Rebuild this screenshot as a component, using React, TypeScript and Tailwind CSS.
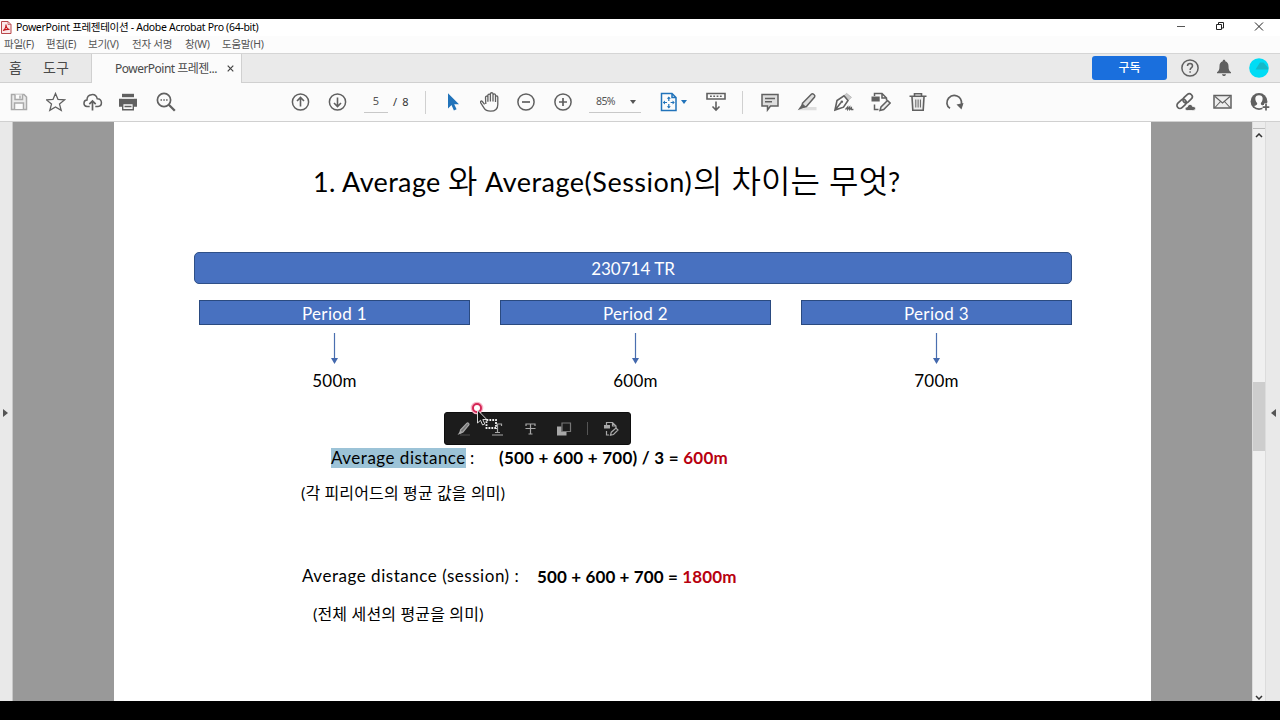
import React from 'react';

type IconProps = { className?: string; children: React.ReactNode };

const Icon: React.FC<IconProps> = ({ className = 'text-[#606060]', children }) => (
  <svg
    className={`w-5 h-5 shrink-0 ${className}`}
    viewBox="0 0 20 20"
    fill="none"
    stroke="currentColor"
    strokeWidth="1.5"
  >
    {children}
  </svg>
);

const Cell: React.FC<{ children: React.ReactNode }> = ({ children }) => (
  <div className="w-[37px] h-full shrink-0 flex items-center justify-center">{children}</div>
);

const menus = [
  { label: '파일(F)', width: 'w-[42px]' },
  { label: '편집(E)', width: 'w-[42px]' },
  { label: '보기(V)', width: 'w-[44px]' },
  { label: '전자 서명', width: 'w-[53px]' },
  { label: '창(W)', width: 'w-[37px]' },
  { label: '도움말(H)', width: 'w-[50px]' },
];

const periods = [
  { name: 'Period 1', value: '500m' },
  { name: 'Period 2', value: '600m' },
  { name: 'Period 3', value: '700m' },
];

const TitleBar: React.FC = () => (
  <div className="h-[17px] bg-white flex items-center">
    <svg className="w-3 h-[13px] shrink-0" viewBox="0 0 12 13" fill="none">
      <path d="M1.5 .5h6.5l3 3v9H1.500z" fill="#fbe9ea" stroke="#b7474b" />
      <path d="M8 .5v3h3" stroke="#b7474b" strokeWidth=".7" />
      <path d="M3 9.500c2-1 3-4 3-6 0 3 1.500 4.500 3.500 5-2-.3-4 0-6.500 1z" stroke="#c4161c" strokeWidth="1.100" />
    </svg>
    <div className="ml-1 text-[10.5px] text-black whitespace-nowrap tracking-[-0.3px]">
      PowerPoint 프레젠테이션 - Adobe Acrobat Pro (64-bit)
    </div>
    <div className="ml-auto flex items-center">
      <svg className="w-[103px] h-[17px]" viewBox="0 0 103 17" fill="none" stroke="#222">
        <path d="M0 7.500h8" stroke="#555" />
        <path d="M39.500 5.500h5v5h-5zM41.500 5.500v-2h5v5.500h-2" />
        <path d="M78 3.500l8 8M86 3.500l-8 8" />
      </svg>
    </div>
  </div>
);

const MenuBar: React.FC = () => (
  <div className="h-[17px] bg-[#fcfcfc] flex items-center pl-1 text-[10.5px] text-[#555] tracking-[-0.25px]">
    {menus.map((m) => (
      <div key={m.label} className={`${m.width} shrink-0 whitespace-nowrap`}>
        {m.label}
      </div>
    ))}
  </div>
);

const TabBar: React.FC = () => (
  <div className="h-[30px] bg-[#eaeaea] border-t border-[#d5d5d5] flex text-[#4a4a4a]">
    <div className="w-[91px] h-full pb-[2px] border-b border-[#d0d0d0] bg-[#e9e9e9] flex items-center text-[14px]">
      <div className="ml-[9px] w-[34px]">홈</div>
      <div>도구</div>
    </div>
    <div className="w-[151px] h-full bg-[#fbfbfb] border-x border-[#d0d0d0] flex items-center text-[12px]">
      <div className="ml-[23px] w-[103px] whitespace-nowrap tracking-[-0.52px]">PowerPoint 프레젠...</div>
      <svg className="ml-[9px] w-[7px] h-[7px]" viewBox="0 0 7 7" stroke="#444" strokeWidth="1.2">
        <path d="M.7 .7l5.600 5.600M6.300 .7l-5.600 5.600" />
      </svg>
    </div>
    <div className="flex-1 h-full border-b border-[#d0d0d0] flex items-center justify-end">
      <button className="w-[75px] h-6 rounded-[3px] bg-[#1a6fdd] text-white text-[12px] font-medium flex items-center justify-center">
        구독
      </button>
      <div className="ml-2 flex h-full">
        <div className="w-[30px] flex items-center justify-center">
          <Icon>
            <circle cx="10" cy="10" r="8.100" />
            <path d="M7.500 8c0-3.200 5-3.200 5 0 0 1.700-2.400 1.700-2.400 4" />
            <path d="M10.100 13.200v1.600" />
          </Icon>
        </div>
        <div className="w-[38px] flex items-center justify-center">
          <Icon>
            <path
              d="M10 1.800c-1 0-1.300.7-1.300 1.400C6.300 4 5.500 6 5.500 8c0 3.500-.6 5-2.500 6.300v1h14v-1C15.100 13 14.500 11.500 14.500 8c0-2-.8-4-3.200-4.800 0-.7-.3-1.400-1.300-1.400zM8 16.200h4c0 2.400-4 2.400-4 0z"
              fill="currentColor"
              stroke="none"
            />
          </Icon>
        </div>
        <div className="w-[31px] flex items-center justify-center">
          <Icon className="text-[#00dcf5]">
            <circle cx="10" cy="10" r="9.800" fill="currentColor" stroke="none" />
            <path d="M6.500 11.500L11 4.500 14.500 4.500 19 9.500v2z" fill="#15b8c8" stroke="none" />
          </Icon>
        </div>
        <div className="w-[6px]" />
      </div>
    </div>
  </div>
);

const Separator: React.FC = () => <div className="w-px h-[23px] bg-[#d0d0d0] shrink-0" />;

const Toolbar: React.FC = () => (
  <div className="h-[39px] bg-[#fbfbfb] border-b border-[#d0d0d0] flex items-center text-[11px] text-[#555]">
    <Cell>
      <Icon className="text-[#a9a9a9]">
        <path d="M2.500 2.500h12.500l2.500 2.500v12.500h-15z" fill="#ececec" />
        <path d="M6 2.500v5h7.500v-5M11 3.500v3M5.500 17v-6h9v6" fill="#fbfbfb" />
      </Icon>
    </Cell>
    <Cell>
      <Icon>
        <path d="M9.500 1.500l2.500 6 6.500.4-5 4.200 1.700 6.300-5.700-3.500-5.700 3.500 1.700-6.300-5-4.200 6.500-.4z" strokeWidth="1.300" />
      </Icon>
    </Cell>
    <Cell>
      <Icon>
        <path d="M6.700 14.500H4C-.2 14 .1 8.300 4 8.100 3.900 1.300 13 .8 14.200 6.700c5.500.2 5.500 7.500.8 7.800h-2.700" />
        <path d="M9.500 18.500V9.500M6.300 12.200L9.500 9l3.200 3.200" strokeWidth="1.700" />
      </Icon>
    </Cell>
    <div className="-ml-[2px] shrink-0 h-full flex">
      <Cell>
        <Icon>
          <path d="M4 1.800h12v3.700H4z" fill="#606060" stroke="none" />
          <path d="M1 6.700h18v8h-3v-3H4v3H1z" fill="#606060" stroke="none" />
          <path d="M4.700 11.500h10.600v6.300H4.700zM6.500 14.500h7" strokeWidth="1.400" />
          <path d="M4 5.900h12" stroke="#fbfbfb" strokeWidth="1" />
        </Icon>
      </Cell>
      <div className="w-px" />
      <Cell>
        <Icon>
          <circle cx="8" cy="8" r="6.600" strokeWidth="1.700" />
          <path d="M12.800 12.800l6 6" strokeWidth="2.300" />
          <path d="M4.500 8h1.500M7.300 8h1.500M10.100 8h1.500" />
        </Icon>
      </Cell>
    </div>
    <div className="w-[98px] shrink-0" />
    <Cell>
      <Icon>
        <circle cx="9.500" cy="10" r="8.100" />
        <path d="M9.500 14.500V5.500M6 9l3.500-3.500L13 9" strokeWidth="1.600" />
      </Icon>
    </Cell>
    <Cell>
      <Icon>
        <circle cx="9.500" cy="10" r="8.100" />
        <path d="M9.500 5.500v9M6 11l3.500 3.500L13 11" strokeWidth="1.600" />
      </Icon>
    </Cell>
    <div className="ml-2 w-6 h-[22px] border-b border-[#c8c8c8] flex items-center justify-center">5</div>
    <div className="ml-[5px] w-8 whitespace-pre text-[#333] tracking-[-0.2px]">/  8</div>
    <Separator />
    <div className="w-2 shrink-0" />
    <Cell>
      <Icon className="text-[#2173ba]">
        <path d="M5 1.200v15.200l3.500-3.300 2.400 5.400 2.700-1.200-2.400-5.100h4.800z" fill="currentColor" stroke="none" />
      </Icon>
    </Cell>
    <Cell>
      <Icon>
        <path
          d="M4.600 12.300L2.300 9.500c-1-1.200-2.500 0-1.700 1.200l3.500 5.500c1.300 2.200 3.300 3 6.400 3 4.700 0 7.300-2.500 7.300-6.700V5.200c0-1.700-2.300-1.700-2.300 0V10m0-4.500V3.200c0-1.700-2.500-1.700-2.500 0v6.300m0-6.500V2c0-1.700-2.600-1.700-2.600 0v7.500M10.400 3.300c0-1.700-2.500-1.700-2.500 0v6.500m0-4.600c0-1.700-2.400-1.500-2.400.2l.3 6.600"
          strokeWidth="1.300"
        />
      </Icon>
    </Cell>
    <Cell>
      <Icon>
        <circle cx="9" cy="10" r="8.100" />
        <path d="M5 10h8" strokeWidth="1.700" />
      </Icon>
    </Cell>
    <Cell>
      <Icon>
        <circle cx="9" cy="10" r="8.100" />
        <path d="M5 10h8M9 6v8" strokeWidth="1.700" />
      </Icon>
    </Cell>
    <div className="ml-[7px] w-[52px] h-[22px] border-b border-[#c8c8c8] shrink-0 flex items-center pl-[7px] text-[10.5px]">
      <div className="w-[34px] tracking-[-0.6px]">85%</div>
      <svg className="w-[6px] h-[4px]" viewBox="0 0 6 4" fill="#555">
        <path d="M0 0h6L3 4z" />
      </svg>
    </div>
    <div className="w-[47px] ml-[18px] shrink-0 flex items-center">
      <Icon className="text-[#2173ba]">
        <path d="M2.500 1.500h10.500l4 4v13H2.500zM13 1.500v4h4" />
        <path d="M9.800 5.500v3.500M9.800 12v3.500M4.500 10.500H8M11.600 10.500H15" strokeWidth="1.200" />
        <path
          d="M9.800 4.500l2 2.200h-4zM9.800 16.500l2-2.200h-4zM3.800 10.500L6 8.500v4zM15.800 10.500l-2.200-2v4z"
          fill="currentColor"
          stroke="none"
        />
      </Icon>
      <svg className="ml-[2px] w-[6px] h-[4px]" viewBox="0 0 6 4" fill="#2173ba">
        <path d="M0 0h6L3 4z" />
      </svg>
    </div>
    <Icon>
      <path d="M1 1.500h18v5.500H1z" strokeWidth="1.600" />
      <path d="M4 4.300h12" strokeDasharray="1.800 1.500" />
      <path d="M10 9.500v8.500M6.500 14.500L10 18l3.500-3.500" strokeWidth="1.600" />
    </Icon>
    <div className="w-[16px] shrink-0" />
    <Separator />
    <div className="w-2 shrink-0" />
    <Cell>
      <Icon>
        <path d="M2 2.500h16v11.500h-7.500L7.500 18v-4H2z" fill="#dedede" />
        <path d="M5 6.500h10M5 9.800h7" />
      </Icon>
    </Cell>
    <Cell>
      <Icon>
        <path d="M6 15h13.500v3.300H1.500z" fill="#dedede" stroke="none" />
        <path d="M5.500 11.200L14.600 2c1-1 4.200 1.400 3 3l-8.200 9.500-4.300.8z" fill="#dedede" />
        <path d="M5.400 11.500l3.700 3.200L5 16.500l-4.300 1.700z" fill="#606060" stroke="none" />
      </Icon>
    </Cell>
    <Cell>
      <Icon>
        <path d="M10.500 3.300l2-2 5 4-2.500 2.500z" fill="#ccc" stroke="#b0b0b0" strokeWidth=".7" />
        <path d="M1 18l2-9.500 7-4.700 4 4.700-4.500 6.700zM1.500 17.500l5.500-7" strokeWidth="1.600" />
        <circle cx="7.800" cy="9.800" r="1.300" fill="currentColor" stroke="none" />
        <path d="M11.500 17.500l2.200-2.500v2.500l2-2.500v2.500l1.700-1.700v1.700h2" strokeWidth="1.300" />
      </Icon>
    </Cell>
    <Cell>
      <Icon>
        <path d="M3.500 4V1.500h7.500l4.500 4.500v2.500M11 1.500V6h4.500M3.500 12.500v5h4" strokeWidth="1.500" />
        <path d="M.5 4.500h8.200v5H.5z" fill="currentColor" stroke="none" />
        <path d="M9 18.500l1-3.500 6.500-6.500 2.700 2.600-6.500 6.500z" fill="#ececec" />
      </Icon>
    </Cell>
    <Cell>
      <Icon>
        <path d="M4 5l.8 13.300h10.400L16 5" fill="#ececec" strokeWidth="1.600" />
        <path d="M1.500 4.200h17M6.500 4V1.700h7V4" strokeWidth="1.600" />
        <path d="M7.800 7.500v8M10.100 7.500v8M12.400 7.500v8" strokeWidth="1" />
      </Icon>
    </Cell>
    <Cell>
      <Icon>
        <path d="M5 16.300c-3.700-2.300-4-7-1.400-10.200 5-5.400 13.200-2 12.900 5.400v2" strokeWidth="1.700" />
        <path d="M11.500 12.500l7-1.500-2 6.500z" fill="currentColor" stroke="none" />
      </Icon>
    </Cell>
    <div className="ml-auto mr-[2px] flex h-full">
      <Cell>
        <Icon>
          <g transform="rotate(-43 9 9)" strokeWidth="1.700">
            <rect x="-.7" y="5.800" width="10.500" height="6" rx="3" />
            <rect x="7.500" y="5.800" width="10.500" height="6" rx="3" />
          </g>
          <path d="M11.500 18.500c-3.500 0-2.800-3.700-.2-3.600 1-3.500 4.800-3 5.300-.4 4-.2 4 4 0 4z" fill="currentColor" stroke="#fbfbfb" strokeWidth=".8" />
        </Icon>
      </Cell>
      <Cell>
        <Icon>
          <path d="M1 3.500h17v12.500H1z" fill="#eeeeee" strokeWidth="1.500" />
          <path d="M2 4.500l7.500 6.500L17 4.500M2 15.500l5.500-6M17 15.500l-5.500-6" strokeWidth="1.100" />
        </Icon>
      </Cell>
      <Cell>
        <Icon>
          <circle cx="9" cy="9.500" r="8.400" fill="#606060" stroke="none" />
          <path d="M9 3.200c-4.800 0-4.300 5-1.900 7.800.5 1.700-.5 2-3 3.100 2.300 3 7.800 3 9.800 0-2.500-1.100-3.500-1.400-3-3.100C13.300 8.200 13.800 3.200 9 3.200z" fill="#fbfbfb" stroke="none" />
          <path d="M16 11.500v7M12.500 15h7" stroke="#fbfbfb" strokeWidth="4" />
          <path d="M16 12v6.500M12.700 15.200h6.600" strokeWidth="1.700" />
        </Icon>
      </Cell>
    </div>
  </div>
);

const DarkIcon: React.FC<{ children: React.ReactNode }> = ({ children }) => (
  <svg className="w-4 h-4 shrink-0" viewBox="0 0 16 16" fill="none" stroke="#a8a8a8" strokeWidth="1.200">
    {children}
  </svg>
);

// Floating bar that pops up over the selected text
const SelectionBar: React.FC = () => (
  <div className="absolute left-[330px] top-[290px] w-[187px] h-[33px] rounded-[3px] bg-[#1c1c1c] border border-[#0e0e0e] flex items-center pl-[11px]">
    <DarkIcon>
      <path d="M4 14h10" stroke="#333" strokeWidth="2" />
      <path d="M4.500 9L11 2.200c1-.8 2.600.7 1.800 1.800L7 11l-3 1.200z" fill="#777" />
      <path d="M4.500 9.500l2.200 2L1.500 14z" fill="#a8a8a8" stroke="none" />
    </DarkIcon>
    <div className="w-[17px]" />
    <DarkIcon>
      <path d="M4 5V3h8.500v2M8.500 3v8.500M6 11.500h5M3 14h11" />
    </DarkIcon>
    <div className="w-[18px]" />
    <DarkIcon>
      <path d="M3 5V3h9v2M7.500 3v10M5.500 13h4M2.500 7.500h10" />
    </DarkIcon>
    <div className="w-[17px]" />
    <DarkIcon>
      <path d="M1 5.500h4.500v5h5v4H1z" fill="#a8a8a8" stroke="none" />
      <path d="M6 2h8.500v8.500H6z" stroke="#777" />
    </DarkIcon>
    <div className="ml-[15px] w-px h-[13px] bg-[#555]" />
    <div className="w-[15px]" />
    <DarkIcon>
      <path d="M3.500 4V1.500h6L13 5v2.500M9.500 1.500V5H13M3.500 10v4H6" />
      <path d="M1 4h6v3.500H1z" fill="#a8a8a8" stroke="none" />
      <path d="M7.500 14.200l.8-3L13 7l2 2-4.500 4.500z" />
    </DarkIcon>
  </div>
);

const Pointer: React.FC = () => (
  <svg className="absolute left-[356px] top-[278px] w-[34px] h-[34px]" viewBox="0 0 34 34" fill="none">
    <circle cx="7" cy="8" r="5.300" stroke="#f7b5c7" strokeWidth="2" />
    <circle cx="7" cy="8" r="4" fill="#fff" stroke="#d42655" strokeWidth="2" />
    <path d="M7.500 10v13l3-2.700 2.100 4.700 2.200-1-2-4.500h4z" fill="#111" stroke="#eee" strokeWidth=".9" />
    <path d="M16.500 20h9.500v8h-9.500z" fill="#1c1c1c" stroke="#f0f0f0" strokeWidth="1.800" strokeDasharray="1.800 1.100" />
  </svg>
);

const Slide: React.FC = () => (
  <div className="relative w-[1037px] h-full shrink-0 bg-white text-black font-['Lato','Noto_Sans_CJK_KR',sans-serif] whitespace-nowrap">
    <h1 className="h-[60px] mt-[30px] pl-[199px] flex items-center text-[27px]">
      <span className="w-[135px] tracking-[0.35px]">1. Average</span>
      <span className="w-[37px] -mt-[3px] text-[32px] font-[350]">와</span>
      <span className="w-[208px] tracking-[0.5px]">Average(Session)</span>
      <span className="w-[195px] -mt-[3px] text-[32px] font-[350] tracking-[0.15px]">의 차이는 무엇</span>
      <span>?</span>
    </h1>

    <div className="mt-[40px] ml-[80px] w-[878px] h-8 pt-px rounded-[5px] bg-[#4871c0] border border-[#2f5088] text-white text-[17px] flex items-center justify-center">
      230714 TR
    </div>

    <div className="mt-4 ml-[85px] w-[873px] flex justify-between">
      {periods.map((p) => (
        <div key={p.name} className="w-[271px] flex flex-col items-center">
          <div className="w-full h-[25px] pt-[2px] bg-[#4871c0] border border-[#2a4a80] text-white text-[17px] tracking-[0.35px] flex items-center justify-center">
            {p.name}
          </div>
          <svg className="mt-2 w-[9px] h-[31px]" viewBox="0 0 9 31">
            <path d="M4.500 0v26" stroke="#4a6fb0" strokeWidth="1.200" />
            <path d="M1 25h7l-3.500 6z" fill="#4368ad" />
          </svg>
          <div className="h-[34px] flex items-center text-[17px] tracking-[0.2px]">{p.value}</div>
        </div>
      ))}
    </div>

    <div className="mt-[50px] h-5 pl-[217px] flex items-center text-[17px]">
      <span className="w-[135px] h-5 bg-[#9cc3d7] flex items-center tracking-[0.5px]">Average distance</span>
      <span className="w-[33px] pl-1">:</span>
      <span className="font-bold tracking-[0.24px]">
        (500 + 600 + 700) / 3 = <span className="text-[#b8000f]">600m</span>
      </span>
    </div>
    <div className="mt-[13px] h-6 pl-[187px] flex items-center text-[16px] tracking-[0.14px]">
      (각 피리어드의 평균 값을 의미)
    </div>

    <div className="mt-[61px] h-5 pl-[188px] flex items-center text-[17px]">
      <span className="w-[235px] tracking-[0.53px]">Average distance (session) :</span>
      <span className="pt-px font-bold tracking-[0.12px]">
        500 + 600 + 700 = <span className="text-[#b8000f]">1800m</span>
      </span>
    </div>
    <div className="mt-4 h-6 pl-[199px] flex items-center text-[16px] tracking-[0.17px]">
      (전체 세션의 평균을 의미)
    </div>

    <SelectionBar />
    <Pointer />
  </div>
);

const Scrollbar: React.FC = () => (
  <div className="w-[14px] h-full bg-[#f0f0f0] border-x border-[#dcdcdc] flex flex-col items-center">
    <div className="w-full h-[7px] bg-[#ececec] border-b border-[#bbb]" />
    <svg className="mt-1 w-2 h-[5px] shrink-0" viewBox="0 0 8 5" fill="none" stroke="#333" strokeWidth="1.500">
      <path d="M1 4l3-3 3 3" />
    </svg>
    <div className="mt-[244px] w-full h-[69px] bg-[#cdcdcd]" />
    <svg className="mt-auto mb-px w-2 h-[5px] shrink-0" viewBox="0 0 8 5" fill="none" stroke="#333" strokeWidth="1.500">
      <path d="M1 1l3 3 3-3" />
    </svg>
  </div>
);

const App: React.FC = () => {
  return (
    <div className="w-[1280px] h-[720px] overflow-hidden bg-black pt-[19px] font-['Noto_Sans','Noto_Sans_CJK_KR',sans-serif]">
      <TitleBar />
      <MenuBar />
      <TabBar />
      <Toolbar />
      <div className="h-[579px] bg-[#999] flex overflow-hidden">
        <div className="w-[13px] h-full bg-[#e9e9e9] border-r border-[#c8c8c8] flex items-center">
          <svg className="ml-[3px] mt-[2px] w-[5px] h-2" viewBox="0 0 5 8" fill="#555">
            <path d="M0 0l5 4-5 4z" />
          </svg>
        </div>
        <div className="flex-1 h-full flex justify-center">
          <Slide />
        </div>
        <Scrollbar />
        <div className="w-[14px] h-full bg-[#e9e9e9] flex items-center">
          <svg className="ml-[5px] mt-[2px] w-[5px] h-2" viewBox="0 0 5 8" fill="#555">
            <path d="M5 0L0 4l5 4z" />
          </svg>
        </div>
      </div>
    </div>
  );
};

export default App;
